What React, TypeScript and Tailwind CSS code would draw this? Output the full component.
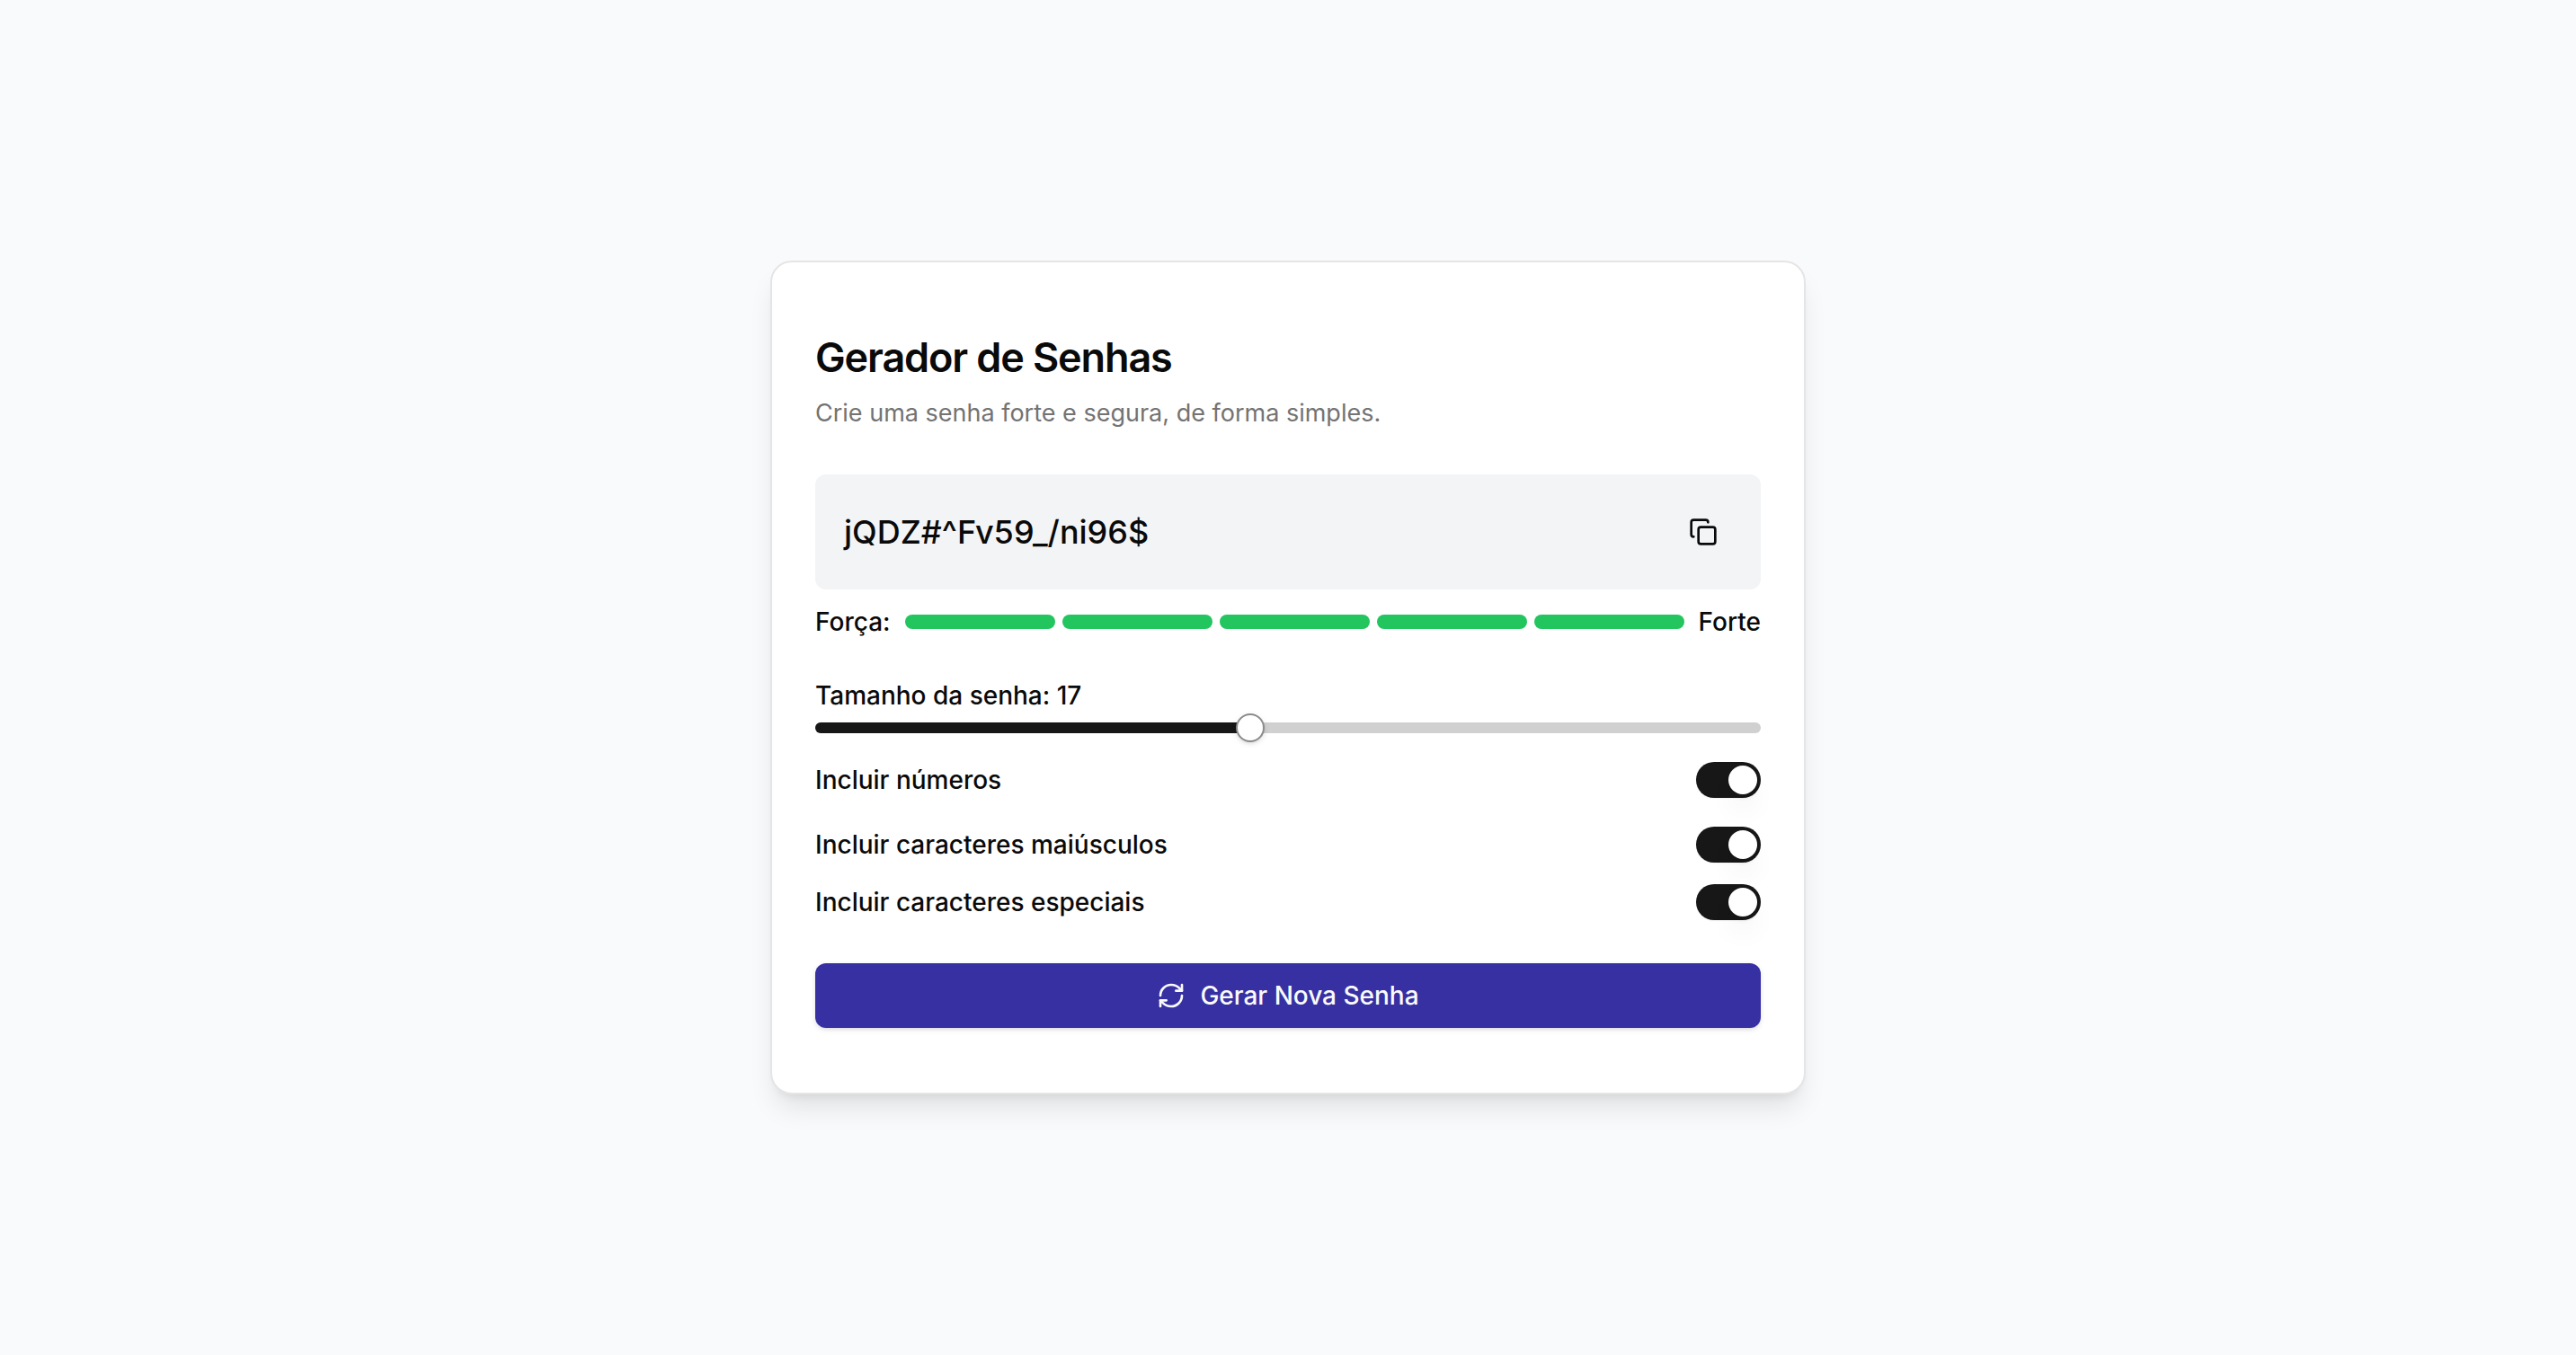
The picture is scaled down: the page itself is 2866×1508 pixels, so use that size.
import { useState } from "react";
import { Copy, RefreshCw } from "lucide-react";
import * as Slider from "@radix-ui/react-slider";

const STRENGTH_BARS = [1, 2, 3, 4, 5];

function Toggle({ id, label }: { id: string; label: string }) {
  const [on, setOn] = useState(true);
  return (
    <div className="flex h-10 items-center justify-between">
      <label htmlFor={id} className="text-[28px] leading-10 font-medium">
        {label}
      </label>
      <span className="relative h-10 w-18">
        <input
          id={id}
          type="checkbox"
          role="switch"
          checked={on}
          onChange={(e) => setOn(e.target.checked)}
          className="peer block h-10 w-18 cursor-pointer appearance-none rounded-full bg-neutral-200 shadow-xs checked:bg-neutral-900"
        />
        <span className="pointer-events-none absolute top-1 left-1 size-8 rounded-full bg-white shadow-[0_20px_30px_-6px_rgb(0_0_0/0.1),0_8px_12px_-8px_rgb(0_0_0/0.1)] peer-checked:left-9" />
      </span>
    </div>
  );
}

export default function App() {
  const [size, setSize] = useState(17);
  return (
    <main className="flex min-h-screen items-center justify-center bg-[#f9fafb] font-['Inter',sans-serif] text-neutral-950">
      <section className="w-full max-w-6xl rounded-3xl border-2 border-neutral-200 bg-white px-12 pt-20 pb-18 shadow-[0_20px_30px_-6px_rgb(0_0_0/0.1),0_8px_12px_-8px_rgb(0_0_0/0.1)]">
        <header className="mb-12">
          <h1 className="text-[45px] leading-[52px] font-semibold tracking-tight">Gerador de Senhas</h1>
          <p className="mt-4 text-[27px] leading-10 text-neutral-500">
            Crie uma senha forte e segura, de forma simples.
          </p>
        </header>

        <div className="flex h-32 items-center justify-between rounded-xl bg-gray-100 px-8">
          <output className="text-4xl font-medium">jQDZ#^Fv59_/ni96$</output>
          <button type="button" aria-label="Copiar senha" className="flex size-16 items-center justify-center">
            <Copy className="size-8" />
          </button>
        </div>

        <div className="mt-4 flex items-center gap-4 text-[28px] leading-10 font-medium">
          <span>Força:</span>
          <div className="flex flex-1 gap-2">
            {STRENGTH_BARS.map((n) => (
              <span key={n} className="h-4 flex-1 rounded-full bg-[#22c55e]" />
            ))}
          </div>
          <span>Forte</span>
        </div>

        <div className="mt-[42px]">
          <p id="size-label" className="text-[28px] leading-10 font-medium">
            Tamanho da senha: {size}
          </p>
          <Slider.Root
            min={6}
            max={30}
            value={[size]}
            onValueChange={([v]) => setSize(v)}
            className="relative flex h-8 w-full items-center"
          >
            <Slider.Track className="relative h-3 w-full grow overflow-hidden rounded-full bg-[#d0d0d0]">
              <Slider.Range className="absolute h-full bg-neutral-900" />
            </Slider.Track>
            <Slider.Thumb
              aria-labelledby="size-label"
              className="block size-8 rounded-full border-2 border-[#8b8b8b] bg-white shadow-[0_2px_6px_0_rgb(0_0_0/0.1),0_2px_4px_-2px_rgb(0_0_0/0.1)]"
            />
          </Slider.Root>
        </div>

        <div className="mt-[22px]">
          <Toggle id="numbers" label="Incluir números" />
        </div>
        <div className="mt-8">
          <Toggle id="uppercase" label="Incluir caracteres maiúsculos" />
        </div>
        <div className="mt-6">
          <Toggle id="special" label="Incluir caracteres especiais" />
        </div>

        <button
          type="button"
          className="mt-12 flex h-18 w-full items-center justify-center gap-4 rounded-xl bg-[#3730a3] text-[28px] leading-10 font-medium text-neutral-50 shadow-[0_2px_6px_0_rgb(0_0_0/0.1),0_2px_4px_-2px_rgb(0_0_0/0.1)]"
        >
          <RefreshCw className="size-8" />
          Gerar Nova Senha
        </button>
      </section>
    </main>
  );
}
